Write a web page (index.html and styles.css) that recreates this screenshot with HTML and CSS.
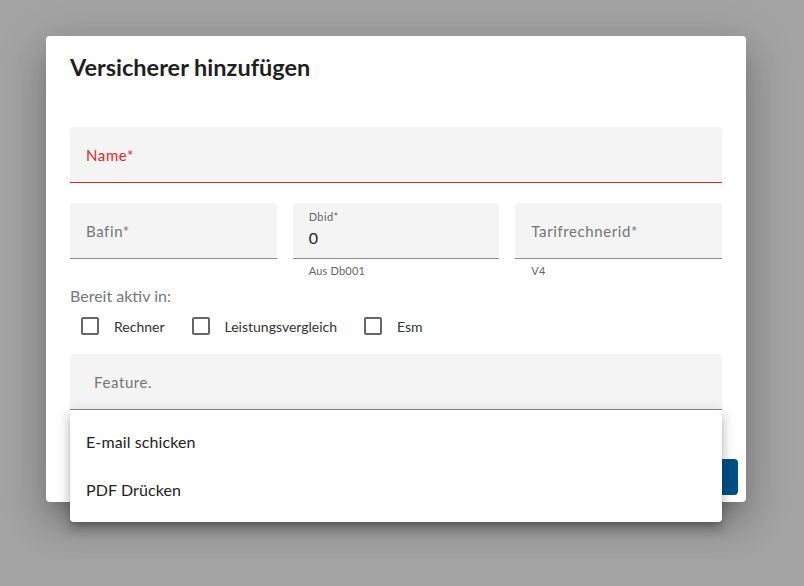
FILE: index.html
```html
<!DOCTYPE html>
<html lang="de">
<head>
<meta charset="utf-8">
<title>Versicherer hinzufügen</title>
<link rel="stylesheet" href="styles.css">
</head>
<body>
<div class="backdrop">
  <div class="dialog">
    <h2 class="title">Versicherer hinzufügen</h2>
    <div class="content">
      <div class="field field-error">
        <span class="label">Name*</span>
      </div>
      <div class="row">
        <div class="col">
          <div class="field"><span class="label">Bafin*</span></div>
          <div class="hint"></div>
        </div>
        <div class="col">
          <div class="field field-filled">
            <span class="float-label">Dbid*</span>
            <span class="value">0</span>
          </div>
          <div class="hint">Aus Db001</div>
        </div>
        <div class="col">
          <div class="field"><span class="label">Tarifrechnerid*</span></div>
          <div class="hint">V4</div>
        </div>
      </div>
      <div class="group-label">Bereit aktiv in:</div>
      <div class="checks">
        <label class="check"><span class="box"></span><span class="check-text">Rechner</span></label>
        <label class="check"><span class="box"></span><span class="check-text">Leistungsvergleich</span></label>
        <label class="check"><span class="box"></span><span class="check-text">Esm</span></label>
      </div>
      <div class="select-wrap">
        <div class="field field-select"><span class="label">Feature.</span></div>
        <div class="menu">
          <div class="menu-item">E-mail schicken</div>
          <div class="menu-item">PDF Drücken</div>
        </div>
      </div>
    </div>
    <div class="actions">
      <button class="btn">Speichern</button>
    </div>
  </div>
</div>
</body>
</html>
```

FILE: styles.css
```css
* { box-sizing: border-box; }
html, body { margin: 0; padding: 0; }
body {
  width: 804px;
  height: 586px;
  overflow: hidden;
  background: #a4a4a4;
  font-family: "Lato", "Noto Sans", sans-serif;
  color: #222;
}
.backdrop {
  padding: 36px 0 0 46px;
}
.dialog {
  width: 700px;
  height: 466px;
  background: #fff;
  border-radius: 4px;
  box-shadow: 0 11px 15px -7px rgba(0,0,0,.2), 0 24px 38px 3px rgba(0,0,0,.14), 0 9px 46px 8px rgba(0,0,0,.12);
  display: flex;
  flex-direction: column;
  padding: 15px 0 0 0;
}
.title {
  margin: 0 24px;
  font-size: 23.5px;
  line-height: 32px;
  font-weight: 700;
  color: #1f1f1f;
}
.content {
  padding: 44px 24px 0 24px;
}
.field {
  position: relative;
  height: 56px;
  background: #f4f4f4;
  border-radius: 4px 4px 0 0;
  border-bottom: 1px solid #8c8c8c;
  padding: 0 16px;
  display: flex;
  flex-direction: column;
  justify-content: center;
}
.label {
  font-size: 15px;
  color: #757575;
  letter-spacing: .6px;
}
.field-error { border-bottom-color: #e5281d; }
.field-error .label { color: #e5281d; }
.row {
  display: grid;
  grid-template-columns: repeat(3, 1fr);
  column-gap: 16px;
  margin-top: 20px;
}
.field-filled {
  justify-content: flex-start;
  padding-top: 8px;
}
.float-label {
  font-size: 11px;
  line-height: 12px;
  color: #666;
  letter-spacing: .4px;
}
.value {
  margin-top: 4px;
  font-size: 16px;
  line-height: 22px;
  color: #222;
}
.hint {
  height: 22px;
  padding: 6px 16px 0;
  font-size: 11px;
  line-height: 12px;
  color: #666;
  letter-spacing: .2px;
}
.group-label {
  margin-top: 5px;
  font-size: 16px;
  line-height: 20px;
  color: #777;
}
.checks {
  display: flex;
  height: 40px;
  align-items: center;
}
.check {
  display: flex;
  align-items: center;
  margin-right: 16px;
}
.box {
  width: 18px;
  height: 18px;
  margin: 11px;
  border: 2px solid #666;
  border-radius: 2px;
}
.check-text {
  font-size: 14px;
  color: #333;
  margin-left: 4px;
}
.select-wrap {
  position: relative;
  margin-top: 8px;
}
.field-select { padding-left: 24px; }
.menu {
  position: absolute;
  top: 100%;
  left: 0;
  right: 0;
  background: #fff;
  border-radius: 0 0 4px 4px;
  padding: 8px 0;
  z-index: 5;
  box-shadow: 0 5px 5px -3px rgba(0,0,0,.2), 0 8px 10px 1px rgba(0,0,0,.14), 0 3px 14px 2px rgba(0,0,0,.12);
}
.menu-item {
  height: 48px;
  line-height: 48px;
  padding: 0 16px;
  font-size: 16px;
  color: #222;
  letter-spacing: .1px;
}
.actions {
  margin-top: auto;
  display: flex;
  justify-content: flex-end;
  padding: 8px 8px 7px;
}
.btn {
  height: 36px;
  padding: 0 16px;
  border: 0;
  border-radius: 4px;
  background: #005085;
  color: #fff;
  font-family: inherit;
  font-size: 14px;
}
```
